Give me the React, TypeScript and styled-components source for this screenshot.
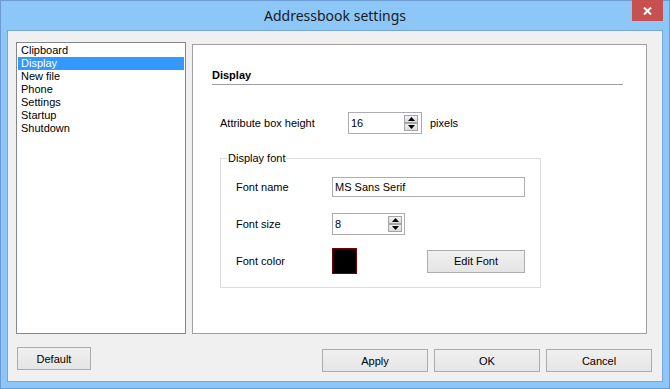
import React from 'react';
import styled, { createGlobalStyle } from 'styled-components';

const GlobalStyle = createGlobalStyle`
  html, body {
    margin: 0;
    padding: 0;
    background: #fff;
  }
  * {
    box-sizing: border-box;
  }
`;

const Window = styled.div`
  display: flex;
  flex-direction: column;
  width: 670px;
  height: 389px;
  border: 1px solid #6c9bd2;
  background: #8cc7f8;
  font-family: 'Liberation Sans', Arial, sans-serif;
  font-size: 11px;
  color: #000;
`;

const TitleBar = styled.div`
  display: grid;
  grid-template-columns: 1fr auto 1fr;
  height: 29px;
`;

const Title = styled.div`
  grid-column: 2;
  align-self: center;
  font-family: 'Noto Sans', 'Open Sans', sans-serif;
  font-size: 14px;
  color: #1a1a1a;
  line-height: 18px;
  padding-top: 1px;
`;

const CloseButton = styled.div`
  grid-column: 3;
  justify-self: end;
  display: flex;
  align-items: center;
  justify-content: center;
  width: 31px;
  height: 21px;
  margin: -1px 6px 0 0;
  background: #c75050;
`;

const Client = styled.div`
  display: flex;
  flex-direction: column;
  flex: 1;
  margin: 0 6px 6px;
  padding: 11px 10px 0 8px;
  border: 1px solid #74a6db;
  background: #f0f0f0;
`;

const TopRow = styled.div`
  display: flex;
  align-items: flex-start;
  gap: 6px;
  height: 292px;
`;

const ListBox = styled.ul`
  width: 170px;
  height: 292px;
  margin: 0;
  padding: 1px;
  list-style: none;
  border: 1px solid #828790;
  background: #fff;
`;

const ListItem = styled.li<{ $selected?: boolean }>`
  height: 13px;
  padding-left: 3px;
  line-height: 13px;
  background: ${({ $selected }) => ($selected ? '#3399ff' : 'transparent')};
  color: ${({ $selected }) => ($selected ? '#fff' : '#000')};
`;

const Panel = styled.div`
  flex: 1;
  height: 290px;
  margin: 2px 5px 0 0;
  border: 1px solid #a0a0a0;
  background: #fff;
`;

const SectionHeader = styled.div`
  margin: 24px 23px 0 19px;
  padding-bottom: 2px;
  border-bottom: 1px solid #a0a0a0;
  font-weight: 700;
  line-height: 13px;
`;

const Content = styled.div`
  display: flex;
  flex-direction: column;
  align-items: flex-start;
  margin: 27px 0 0 27px;
`;

const Row = styled.div<{ $labelWidth: number; $gap?: number }>`
  display: flex;
  align-items: center;
  width: 100%;
  margin-top: ${({ $gap }) => $gap || 0}px;

  & > label {
    flex: 0 0 ${({ $labelWidth }) => $labelWidth}px;
  }
`;

const Suffix = styled.span`
  margin-left: 8px;
`;

const SpinBox = styled.div<{ $width: number; $arrowRight: number }>`
  display: flex;
  align-items: center;
  justify-content: space-between;
  width: ${({ $width }) => $width}px;
  height: 22px;
  padding: 0 ${({ $arrowRight }) => $arrowRight}px 0 2px;
  border: 1px solid #abadb3;
  background: #fff;
`;

const SpinArrows = styled.div`
  display: flex;
  flex-direction: column;
  gap: 0;
`;

const ArrowButton = styled.div`
  display: flex;
  align-items: center;
  justify-content: center;
  width: 14px;
  height: 8px;
  border: 1px solid #a6a6a6;
  background: linear-gradient(#f2f2f2, #dcdcdc);
`;

const TextInput = styled.div`
  display: flex;
  align-items: center;
  width: 193px;
  height: 20px;
  padding-left: 2px;
  border: 1px solid #abadb3;
  background: #fff;
`;

const Group = styled.div`
  position: relative;
  width: 321px;
  margin-top: 24px;
  padding: 18px 15px 13px;
  border: 1px solid #dcdcdc;
`;

const Legend = styled.span`
  position: absolute;
  top: -7px;
  left: 6px;
  padding: 0 1px;
  line-height: 13px;
  background: #fff;
`;

const ColorSwatch = styled.div<{ $color: string }>`
  width: 25px;
  height: 26px;
  border: 1px solid #7a0000;
  background: ${({ $color }) => $color};
`;

const Button = styled.button<{ $width: number }>`
  width: ${({ $width }) => $width}px;
  height: 23px;
  padding: 0;
  border: 1px solid #acacac;
  background: linear-gradient(#f0f0f0, #e5e5e5);
  font-family: 'Liberation Sans', Arial, sans-serif;
  font-size: 11px;
  color: #000;
`;

const EditButton = styled(Button)`
  margin-left: auto;
`;

const BottomRow = styled.div`
  display: flex;
  align-items: flex-start;
  gap: 6px;
  margin-top: 13px;
`;

const DefaultButton = styled(Button)`
  margin: 0 auto 0 1px;
`;

const ActionButton = styled(Button)`
  margin-top: 2px;
`;

const pages = ['Clipboard', 'Display', 'New file', 'Phone', 'Settings', 'Startup', 'Shutdown'];

function Arrow({ up }: { up?: boolean }) {
  return (
    <svg width="7" height="4" viewBox="0 0 7 4">
      <polygon points={up ? '0,4 7,4 3.5,0' : '0,0 7,0 3.5,4'} fill="#000" />
    </svg>
  );
}

function Spinner({ value, width, arrowRight }: { value: string; width: number; arrowRight: number }) {
  return (
    <SpinBox $width={width} $arrowRight={arrowRight}>
      <span>{value}</span>
      <SpinArrows>
        <ArrowButton>
          <Arrow up />
        </ArrowButton>
        <ArrowButton>
          <Arrow />
        </ArrowButton>
      </SpinArrows>
    </SpinBox>
  );
}

export default function App() {
  return (
    <>
      <GlobalStyle />
      <Window>
        <TitleBar>
          <Title>Addressbook settings</Title>
          <CloseButton>
            <svg width="9" height="8" viewBox="0 0 9 8">
              <path d="M1 0.5 L8 7.5 M8 0.5 L1 7.5" stroke="#fff" strokeWidth="2" />
            </svg>
          </CloseButton>
        </TitleBar>
        <Client>
          <TopRow>
            <ListBox>
              {pages.map(p => (
                <ListItem key={p} $selected={p === 'Display'}>
                  {p}
                </ListItem>
              ))}
            </ListBox>
            <Panel>
              <SectionHeader>Display</SectionHeader>
              <Content>
                <Row $labelWidth={128}>
                  <label>Attribute box height</label>
                  <Spinner value="16" width={74} arrowRight={3} />
                  <Suffix>pixels</Suffix>
                </Row>
                <Group>
                  <Legend>Display font</Legend>
                  <Row $labelWidth={96}>
                    <label>Font name</label>
                    <TextInput>MS Sans Serif</TextInput>
                  </Row>
                  <Row $labelWidth={96} $gap={16}>
                    <label>Font size</label>
                    <Spinner value="8" width={73} arrowRight={2} />
                  </Row>
                  <Row $labelWidth={96} $gap={13}>
                    <label>Font color</label>
                    <ColorSwatch $color="#000" />
                    <EditButton $width={98}>Edit Font</EditButton>
                  </Row>
                </Group>
              </Content>
            </Panel>
          </TopRow>
          <BottomRow>
            <DefaultButton $width={74}>Default</DefaultButton>
            <ActionButton $width={106}>Apply</ActionButton>
            <ActionButton $width={106}>OK</ActionButton>
            <ActionButton $width={106}>Cancel</ActionButton>
          </BottomRow>
        </Client>
      </Window>
    </>
  );
}
